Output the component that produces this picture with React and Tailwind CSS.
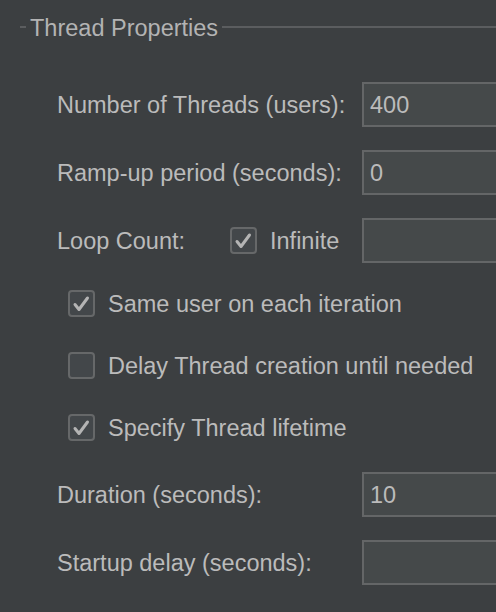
const font = { fontFamily: '"Liberation Sans", Arial, sans-serif' };

function CheckBox({ checked }) {
  return (
    <div className="flex h-[27px] w-[27px] shrink-0 items-center justify-center rounded-[4px] border-2 border-[#666869] bg-[#43474a]">
      {checked && (
        <svg width="27" height="27" viewBox="0 0 27 27" className="-m-[2px]">
          <path
            d="M7 14.5 L11 19.5 L19.5 8"
            fill="none"
            stroke="#b4b4b4"
            strokeWidth="3"
            strokeLinecap="round"
            strokeLinejoin="round"
          />
        </svg>
      )}
    </div>
  );
}

function Field({ value }) {
  return (
    <div className="flex h-full w-[200px] shrink-0 items-center border-2 border-[#646667] bg-[#45494a] pl-[6px] pt-[3px] text-[#bbbbbb]">
      {value}
    </div>
  );
}

function FieldRow({ label, value, className }) {
  return (
    <div className={`flex h-[45px] items-center ${className}`}>
      <div className="w-[305px] shrink-0 pt-[3px]">{label}</div>
      <Field value={value} />
    </div>
  );
}

function CheckRow({ label, checked, className }) {
  return (
    <div className={`flex h-[27px] items-center gap-[13px] pl-[11px] ${className}`}>
      <CheckBox checked={checked} />
      <span className="whitespace-nowrap pt-[3px]">{label}</span>
    </div>
  );
}

export default function App() {
  return (
    <div
      className="h-[612px] w-[496px] overflow-hidden bg-[#3c3f41] text-[23.5px] leading-none text-[#bbbbbb]"
      style={font}
    >
      <div className="flex h-[54px] items-center">
        <div className="ml-[20px] h-[2px] w-[6px] bg-[#5b5d5f]" />
        <span className="px-[4px] pt-[3px] text-[#b3b3b3]">Thread Properties</span>
        <div className="h-[2px] flex-1 bg-[#5b5d5f]" />
      </div>

      <div className="pl-[57px]">
        <FieldRow className="mt-[28px]" label="Number of Threads (users):" value="400" />
        <FieldRow className="mt-[23px]" label="Ramp-up period (seconds):" value="0" />

        <div className="mt-[23px] flex h-[45px] items-center">
          <div className="w-[173px] shrink-0 pt-[3px]">Loop Count:</div>
          <div className="flex w-[132px] shrink-0 items-center gap-[13px]">
            <CheckBox checked />
            <span className="pt-[3px]">Infinite</span>
          </div>
          <Field value="" />
        </div>

        <CheckRow className="mt-[27px]" label="Same user on each iteration" checked />
        <CheckRow className="mt-[35px]" label="Delay Thread creation until needed" />
        <CheckRow className="mt-[35px]" label="Specify Thread lifetime" checked />

        <FieldRow className="mt-[31px]" label="Duration (seconds):" value="10" />
        <FieldRow className="mt-[23px]" label="Startup delay (seconds):" value="" />
      </div>
    </div>
  );
}
